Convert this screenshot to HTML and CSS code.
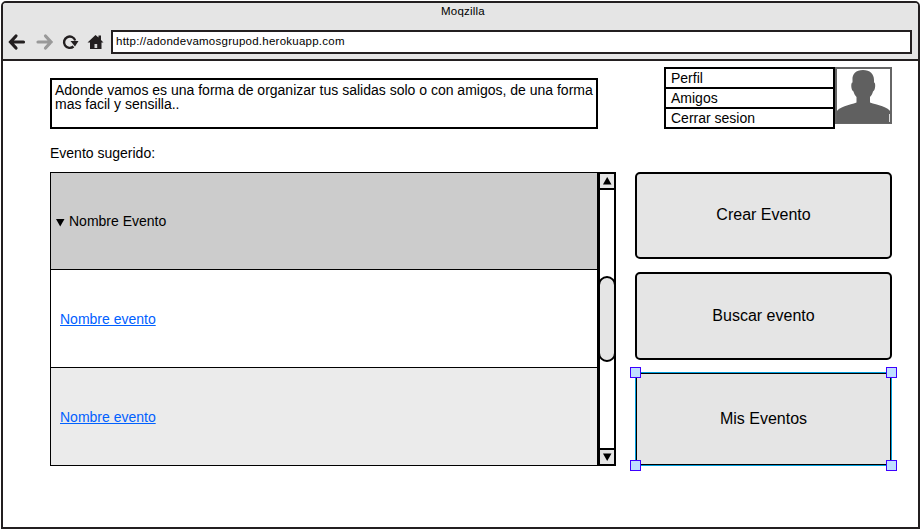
FILE: index.html
```html
<!DOCTYPE html>
<html lang="es">
<head>
<meta charset="utf-8">
<title>Moqzilla</title>
<link rel="stylesheet" href="styles.css">
</head>
<body>
<div class="window">
  <header class="chrome">
    <div class="title">Moqzilla</div>
    <div class="toolbar">
      <svg class="icons" width="108" height="24" viewBox="0 0 108 24">
        <path d="M20.500 12H8.500M13 6L7.500 12l5.500 6" fill="none" stroke="#231f20" stroke-width="3.200" stroke-linecap="round"/>
        <path d="M35 12h13M42.500 6l5.500 6-5.500 6" fill="none" stroke="#999" stroke-width="3.200" stroke-linecap="round"/>
        <path d="M70.500 16.500A5.700 5.700 0 1 1 72.200 10.500" fill="none" stroke="#231f20" stroke-width="2.400"/>
        <path d="M67.500 11h8l-3.500 5.500z" fill="#231f20"/>
        <path d="M84.500 12.500L92.500 5l3 2.500V5.500h2.500v4.500l2.500 2.500H98.500V19H87v-6.500z" fill="#231f20"/>
        <path d="M91.500 14h2.700v4h-2.700z" fill="#d5d5d5"/>
      </svg>
      <div class="url">http://adondevamosgrupod.herokuapp.com</div>
    </div>
  </header>
  <main class="page">
    <div class="top">
      <div class="intro">Adonde vamos es una forma de organizar tus salidas solo o con amigos, de una forma mas facil y sensilla..</div>
      <div class="user">
        <ul class="menu"><li>Perfil</li><li>Amigos</li><li>Cerrar sesion</li></ul>
        <svg class="avatar" width="57" height="57" viewBox="0 0 57 57">
          <path d="M1 1h55v55H1z" fill="#fff" stroke="#666" stroke-width="2"/>
          <path d="M28 3C21 3 17 7 17.500 13v2.500c-2 0-1.500 8 1 9 .5 2 1.500 4 3 5.500v5.500C15 38 3 40 1.500 45v11h54V45c-1.500-5-13.500-7-20.500-9.500V30c1.500-1.500 2.500-3.500 3-5.500 2.500-1 3-9 1-9V13C39 7 35 3 28 3z" fill="#606060"/>
          <path d="M54.500 47v8" stroke="#ddd" stroke-width="1"/>
        </svg>
      </div>
    </div>
    <div class="label">Evento sugerido:</div>
    <div class="content">
      <div class="list">
        <div class="rows">
          <div class="row head"><svg width="9" height="8" viewBox="0 0 9 8"><path d="M0 0h8.500L4.200 7.500z"/></svg>Nombre Evento</div>
          <div class="row"><a href="#">Nombre evento</a></div>
          <div class="row alt"><a href="#">Nombre evento</a></div>
        </div>
        <div class="scroll">
          <div class="arrow"><svg width="9" height="8" viewBox="0 0 9 8"><path d="M0 7.500h8.500L4.200 0z"/></svg></div>
          <div class="track"><div class="thumb"></div></div>
          <div class="arrow down"><svg width="9" height="8" viewBox="0 0 9 8"><path d="M0 .5h8.500L4.200 8z"/></svg></div>
        </div>
      </div>
      <div class="actions">
        <button class="action first">Crear Evento</button>
        <button class="action">Buscar evento</button>
        <button class="action selected">Mis Eventos<i class="handle tl"></i><i class="handle tr"></i><i class="handle bl"></i><i class="handle br"></i></button>
      </div>
    </div>
  </main>
</div>
</body>
</html>
```
FILE: styles.css
```css
* { box-sizing: border-box; }
body { margin: 0; padding: 1px 0 0 1px; background: #fff; color: #000; font: 14px/14px "Liberation Sans", Arial, sans-serif; overflow: hidden; }
.window { width: 919px; height: 528px; border: 2px solid #231f20; border-radius: 5px 5px 0 0; overflow: hidden; background: #fff; }
.chrome { height: 58px; background: #e5e5e5; border-bottom: 2px solid #231f20; }
.title { height: 27px; padding: 2px 0 0 5px; text-align: center; font-size: 11.5px; letter-spacing: .2px; line-height: 13px; }
.toolbar { display: flex; }
.icons { flex: none; }
.url { width: 801px; height: 24px; border: 2px solid #231f20; background: #fff; padding: 3px; font-size: 11.5px; letter-spacing: .25px; line-height: 13px; }
.page { padding: 6px 26px 0 47px; }
.top { display: flex; justify-content: space-between; height: 62px; }
.intro { width: 548px; height: 51px; margin-top: 11px; border: 2px solid #000; padding: 3px 0 0 3px; }
.user { display: flex; align-items: flex-start; }
.menu { width: 171px; margin: 0; padding: 0; list-style: none; border: 2px solid #000; }
.menu li { height: 20px; padding: 0 5px; line-height: 18px; border-bottom: 2px solid #000; }
.menu li:last-child { height: 18px; border: 0; }
.avatar { display: block; }
.label { height: 43px; padding-top: 17px; }
.content { display: flex; justify-content: space-between; height: 294px; }
.list { display: flex; width: 566px; }
.rows { width: 547px; border: 1px solid #000; border-right: 0; }
.row { display: flex; align-items: center; height: 98px; padding: 0 0 0 9px; border-bottom: 1px solid #000; }
.row:last-child { border: 0; height: 97px; padding-top: 1px; }
.row a { color: #0060ff; text-decoration: underline; }
.head { height: 97px; padding: 0 0 0 5px; gap: 4px; background: #ccc; }
.head svg { margin-top: 4px; }
.alt { background: #ebebeb; }
.scroll { display: flex; flex-direction: column; width: 19px; border: 2px solid #000; border-left-width: 3px; }
.arrow { display: flex; align-items: center; justify-content: center; height: 16px; background: #e5e5e5; border-bottom: 2px solid #000; }
.arrow.down { border: 0; border-top: 2px solid #000; }
.track { flex: 1; padding-top: 86px; }
.thumb { height: 86px; margin: 0 -2px; border: 2px solid #000; border-radius: 9px; background: #e5e5e5; }
.actions { display: grid; width: 257px; grid-template-rows: 87px 88px 93px; row-gap: 13px; align-content: start; }
.action { border: 2px solid #000; border-radius: 5px; background: #e5e5e5; color: #000; font: 16px/18px "Liberation Sans", Arial, sans-serif; padding: 0; }
.first { padding-bottom: 2px; }
.selected { position: relative; margin-top: -1px; padding-bottom: 1px; border: 1px solid #009ddc; border-radius: 0; box-shadow: inset 0 0 0 1px #000; }
.handle { position: absolute; width: 11px; height: 11px; border: 1px solid #3c00ff; background: #bfdfff; }
.tl { left: -6px; top: -6px; }
.tr { right: -6px; top: -6px; }
.bl { left: -6px; bottom: -6px; }
.br { right: -6px; bottom: -6px; }
```
